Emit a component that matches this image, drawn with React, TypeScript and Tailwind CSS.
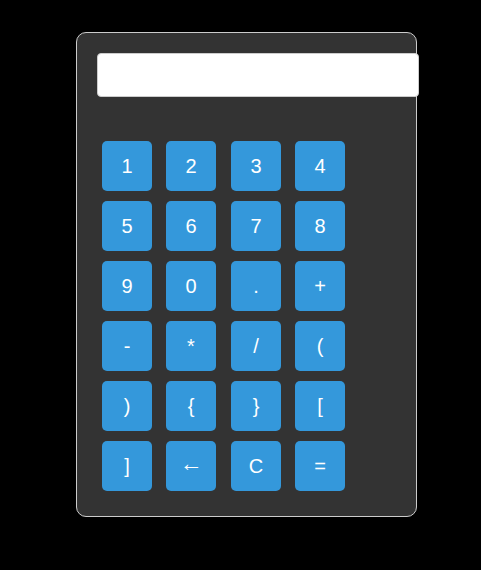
const keys = ["1", "2", "3", "4", "5", "6", "7", "8", "9", "0", ".", "+", "-", "*", "/", "(", ")", "{", "}", "[", "]", "←", "C", "="];

export default function App() {
  return (
    <div className="h-[570px] w-[481px] bg-black pt-[32px] pl-[76px] font-['Liberation_Sans',Arial,sans-serif]">
      <div className="w-[341px] rounded-[10px] border border-[#ccc] bg-[#333] px-[20px] pt-[20px] pb-[25px]">
        <div className="h-[44px] w-[322px] rounded-[4px] border border-[#ccc] bg-white px-[10px] text-[20px]" />
        <div className="mt-[44px] ml-[5px] grid grid-cols-[64px_65px_64px_50px] gap-y-[10px]">
          {keys.map((k) => (
            <button
              key={k}
              className={
                "flex h-[50px] w-[50px] items-center justify-center rounded-[5px] bg-[#3498db] text-white " +
                (k === "←" ? "pb-[6px] text-[23px]" : "text-[20px]")
              }
            >
              {k}
            </button>
          ))}
        </div>
      </div>
    </div>
  );
}
